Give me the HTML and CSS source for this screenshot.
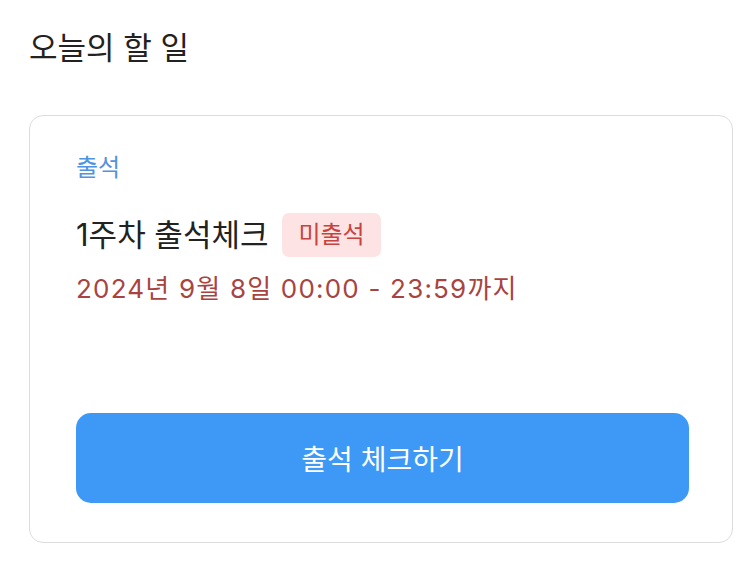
FILE: index.html
```html
<!DOCTYPE html>
<html lang="ko">
<head>
    <meta charset="UTF-8">
    <meta name="viewport" content="width=device-width, initial-scale=1.0">
    <title>오늘의 할 일</title>
    <link rel="stylesheet" href="styles.css">
</head>
<body>
    <main class="page">
        <h1 class="page-title">오늘의 할 일</h1>

        <section class="task-card">
            <div class="task-category">출석</div>

            <div class="task-head">
                <h2 class="task-name">1주차 출석체크</h2>
                <span class="status-badge">미출석</span>
            </div>

            <div class="task-due">2024년 9월 8일 00:00 - 23:59까지</div>

            <button class="check-btn">출석 체크하기</button>
        </section>
    </main>
</body>
</html>
```

FILE: styles.css
```css
:root {
    --text-dark: #222222;
    --blue: #3d99f5;
    --label-blue: #4f94e0;
    --red-bg: #fde3e3;
    --red-text: #c7433f;
    --due-red: #a8443f;
    --border: #dcdcdc;
}

* {
    margin: 0;
    padding: 0;
    box-sizing: border-box;
}

body {
    font-family: Inter, "Noto Sans CJK KR", sans-serif;
    background: #ffffff;
    color: var(--text-dark);
}

.page {
    padding: 31px 23px 0 29px;
}

.page-title {
    font-size: 31px;
    font-weight: 400;
    line-height: 34px;
    margin-bottom: 50px;
}

.task-card {
    display: flex;
    flex-direction: column;
    width: 704px;
    height: 428px;
    border: 1px solid var(--border);
    border-radius: 14px;
    padding: 37px 43px 39px 46px;
}

.task-category {
    font-size: 24px;
    line-height: 30px;
    color: var(--label-blue);
}

.task-head {
    display: flex;
    align-items: center;
    gap: 14px;
    margin-top: 30px;
}

.task-name {
    font-size: 31px;
    font-weight: 400;
    line-height: 44px;
}

.status-badge {
    height: 44px;
    line-height: 44px;
    padding: 0 16px;
    border-radius: 7px;
    background: var(--red-bg);
    color: var(--red-text);
    font-size: 24px;
}

.task-due {
    margin-top: 17px;
    font-size: 26px;
    letter-spacing: 1.2px;
    line-height: 30px;
    color: var(--due-red);
}

.check-btn {
    margin-top: auto;
    height: 90px;
    width: 100%;
    border: none;
    border-radius: 15px;
    background: var(--blue);
    color: #ffffff;
    font-family: inherit;
    font-size: 28px;
    font-weight: 400;
    cursor: pointer;
}
```
